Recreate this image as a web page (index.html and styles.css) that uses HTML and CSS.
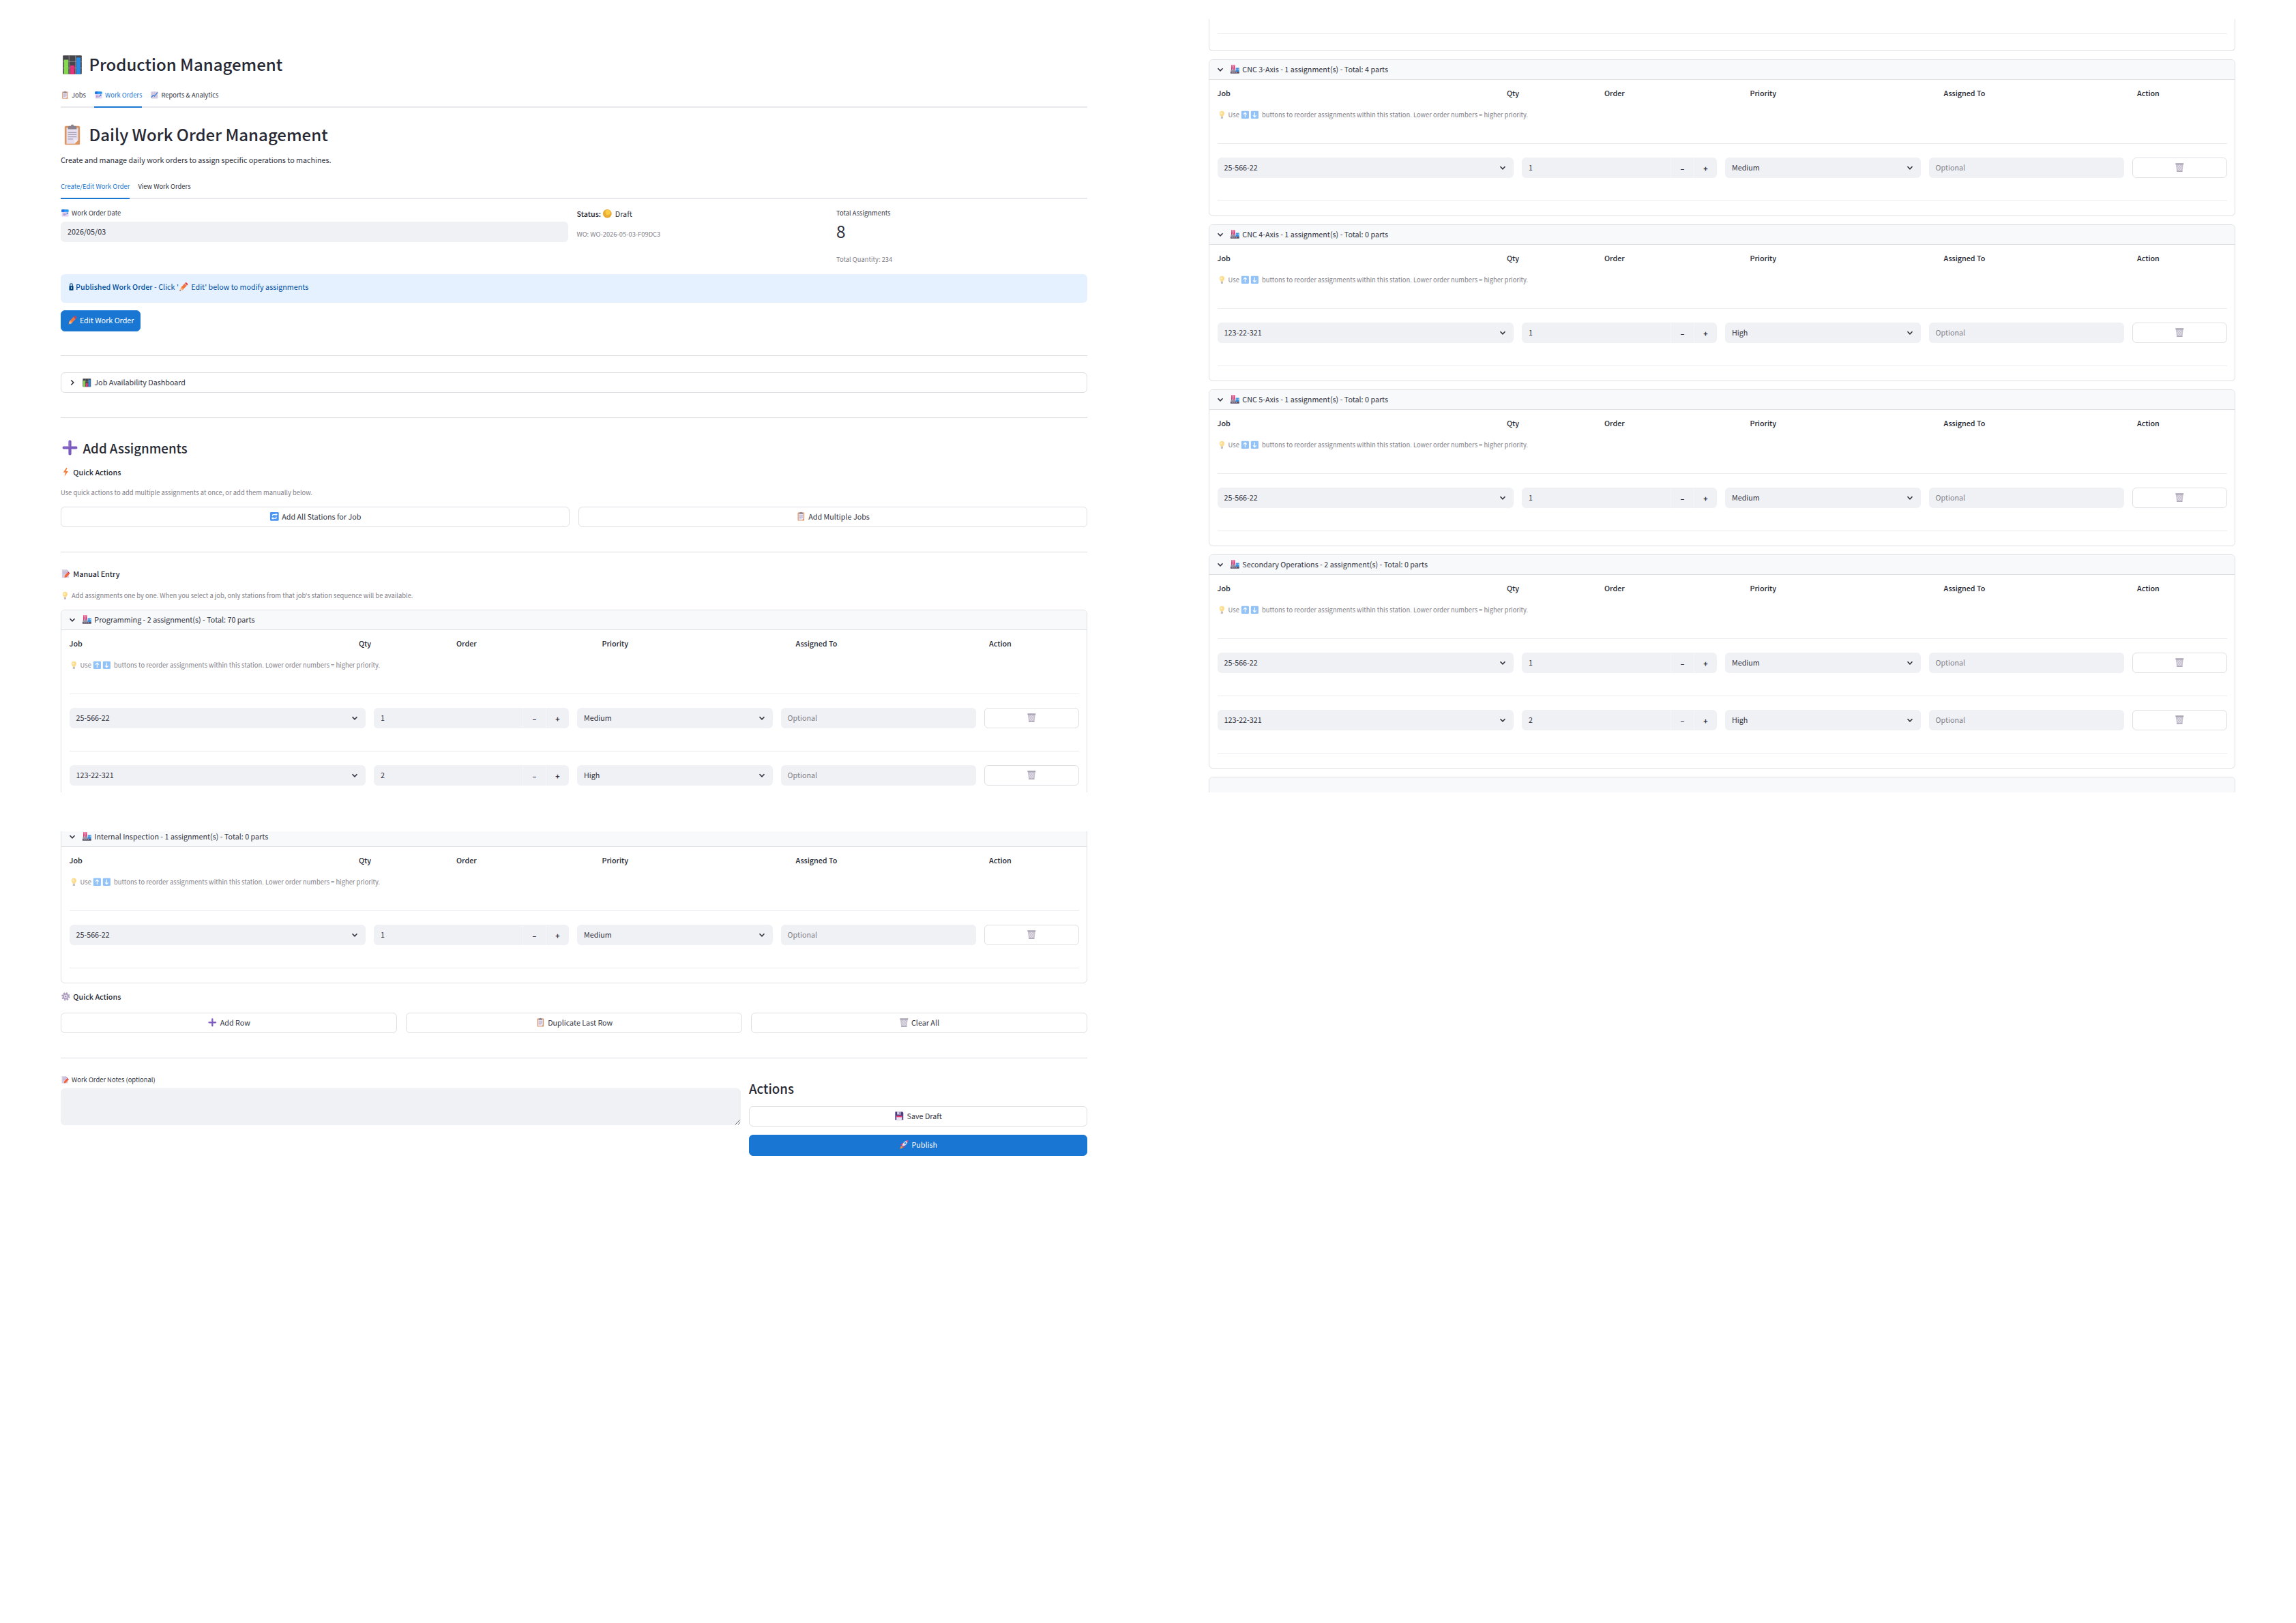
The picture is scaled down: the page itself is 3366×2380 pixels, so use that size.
FILE: index.html
```html
<!DOCTYPE html>
<html lang="en">
<head>
    <meta charset="utf-8">
    <meta name="viewport" content="width=device-width, initial-scale=1.0">
    <title>Production Management</title>
    <link rel="stylesheet" href="styles.css">
</head>
<body>
    <svg class="sprite" width="0" height="0">
        <symbol id="bars" viewBox="0 0 32 32"><rect x="3" y="3" width="26" height="26" rx="1" fill="#464549"/><path d="M3 11.500h26M3 20.500h26M11.500 3v26M20.500 3v26" stroke="#8d8a91" stroke-width="1"/><rect x="4.500" y="9" width="6" height="20" fill="#86d84f"/><rect x="13" y="17" width="6" height="12" fill="#e8307a"/><rect x="21.500" y="6" width="6" height="23" fill="#2a8be0"/></symbol>
        <symbol id="clip" viewBox="0 0 32 32"><rect x="5.500" y="3.500" width="21" height="26" rx="1.500" fill="#de9560"/><path d="M8 6h16v17l-5 5H8z" fill="#e6e0f1"/><path d="M19 28v-5h5z" fill="#f6f2fb"/><path d="M12 3.500h2a2 2 0 0 1 4 0h2a2 2 0 0 1 2 2V8H10V5.500a2 2 0 0 1 2-2z" fill="#8b8290"/><path d="M10 12.500h12M10 15.500h12M10 18.500h12M10 21.500h7" stroke="#a79fb3" stroke-width="1.200"/></symbol>
        <symbol id="calendar" viewBox="0 0 32 32"><rect x="4" y="4" width="25" height="25" rx="3" fill="#e3d5f3"/><path d="M3 6a3 3 0 0 1 3-3h20a3 3 0 0 1 3 3v6H3z" fill="#2196f3"/><path d="M3 6a3 3 0 0 1 3-3h7v9H3z" fill="#2471e8"/><path d="M8 15h3v3H8zM13 15h3v3h-3zM18 15h3v3h-3zM8 20h3v3H8zM13 20h3v3h-3zM18 20h3v3h-3zM8 25h3v2H8zM13 25h3v2h-3z" fill="#a08bc4"/><path d="M22 14h4v6h-4z" fill="#2687ec"/></symbol>
        <symbol id="chart" viewBox="0 0 32 32"><rect x="3" y="3" width="26" height="26" rx="2" fill="#dcd3e8"/><path d="M3 9.500h26M3 16h26M3 22.500h26M9.500 3v26M16 3v26M22.500 3v26" stroke="#bcb0cd" stroke-width="1"/><path d="M4 25l7-8 5 3L28 6" stroke="#2f7fd6" stroke-width="2.800" fill="none"/></symbol>
        <symbol id="lock" viewBox="0 0 16 32"><path d="M4 14V9a4 4 0 0 1 8 0v5" fill="none" stroke="#004280" stroke-width="2.500"/><rect x="1" y="13" width="14" height="15" rx="1.500" fill="#004280"/><path d="M8 17v7" stroke="#e5f1fd" stroke-width="2.500"/></symbol>
        <symbol id="pencil" viewBox="0 0 32 32"><path d="M6 20L19 6l7 7-13 13z" fill="#f4743b"/><path d="M6 20l3-3 7 7-3 3z" fill="#ff9d5c"/><path d="M20 5l2-2q2-1 4 1l2 2q2 2 1 4l-2 2z" fill="#e63946"/><path d="M6 20l7 7-10 3z" fill="#f6c79b"/><path d="M4 26l3 3-4 1z" fill="#5b4450"/></symbol>
        <symbol id="plus" viewBox="0 0 32 32"><path d="M13.500 5q0-2 2.500-2t2.500 2v8.500h8.500q2 0 2 2.500t-2 2.500h-8.500v8.500q0 2-2.500 2t-2.500-2v-8.500H5q-2 0-2-2.500t2-2.500h8.500z" fill="#7c5bbf"/><path d="M14.500 5v9.500H5" stroke="#a08ad8" stroke-width="1.300" fill="none"/></symbol>
        <symbol id="bolt" viewBox="0 0 32 32"><path d="M18 2L8 17h7l-3 13 12-17h-7l4-11z" fill="#fb7f3c"/></symbol>
        <symbol id="cycle" viewBox="0 0 32 32"><rect x="2" y="2" width="28" height="28" rx="3" fill="#4b96f3"/><path d="M10 15v-3q0-2 2-2h9M22 17v3q0 2-2 2h-9" stroke="#fff" stroke-width="2.600" fill="none"/><path d="M20 5.500l6 4.500-6 4.500zM12 17.500L6 22l6 4.500z" fill="#fff"/></symbol>
        <symbol id="memo" viewBox="0 0 32 32"><path d="M4 3h15l7 7v19H4z" fill="#d6cde2"/><path d="M19 3l7 7h-7z" fill="#b7aac9"/><path d="M8 9h8M8 13h12M8 17h8" stroke="#b0a4c2" stroke-width="1.300"/><path d="M13 22l9-10 6 5-9 10-7 2z" fill="#f4633a"/><path d="M22 12l3-2 5 5-2 2z" fill="#e0314f"/></symbol>
        <symbol id="bulb" viewBox="0 0 32 32"><path d="M16 2a9 9 0 0 1 9 9c0 5-4 6-5 11h-8c-1-5-5-6-5-11a9 9 0 0 1 9-9z" fill="#fdc63f"/><circle cx="14" cy="10" r="4" fill="#ffe69a"/><rect x="12" y="22" width="8" height="8" rx="2" fill="#a1989d"/></symbol>
        <symbol id="factory" viewBox="0 0 32 32"><path d="M5 2h4v19H4zM12 2h4l1 19h-6z" fill="#e0306f"/><path d="M5 2h4v5H5zM12 2h4v5h-4z" fill="#f56a95"/><path d="M3 20l6-5v5l7-5v5h4v8H3z" fill="#9a92a4"/><rect x="19" y="12" width="11" height="16" fill="#3b8fe0"/><path d="M21 15h3v3h-3zM26 15h3v3h-3z" fill="#9fd3ff"/><path d="M2 24h28v6H2z" fill="#5b4f66"/><path d="M6 25h3v3H6zM12 25h3v3h-3zM19 25h3v3h-3z" fill="#c9c1d3"/></symbol>
        <symbol id="up" viewBox="0 0 32 32"><rect x="2" y="2" width="28" height="28" rx="3" fill="#4b9cf5"/><path d="M16 25V9M10 14l6-6 6 6" stroke="#fff" stroke-width="3" fill="none"/></symbol>
        <symbol id="down" viewBox="0 0 32 32"><rect x="2" y="2" width="28" height="28" rx="3" fill="#4b9cf5"/><path d="M16 7v16M10 18l6 6 6-6" stroke="#fff" stroke-width="3" fill="none"/></symbol>
        <symbol id="trash" viewBox="0 0 32 32"><path d="M4 5h24l-3 25H7z" fill="#c5bfcd"/><path d="M3 3h26v4H3z" fill="#a9a2b3"/><path d="M9 10l13 15M15 8l9 10M8 17l9 11M23 10L10 25M17 8L8 18M24 17l-9 11" stroke="#f3f0f7" stroke-width="1.400"/><path d="M7 28h18v2H7z" fill="#a39bb0"/></symbol>
        <symbol id="gear" viewBox="0 0 32 32"><circle cx="16" cy="16" r="11.500" fill="none" stroke="#a99bbd" stroke-width="4" stroke-dasharray="5 4.030"/><circle cx="16" cy="16" r="8" fill="#e4dded" stroke="#a99bbd" stroke-width="4"/><circle cx="16" cy="16" r="2.500" fill="#8e7fa6"/></symbol>
        <symbol id="floppy" viewBox="0 0 32 32"><path d="M3 3h23l3 3v23H3z" fill="#4b3b7d"/><path d="M9 3h13v9H9z" fill="#d7cfe6"/><path d="M17 4h3v7h-3z" fill="#4b3b7d"/><path d="M7 16h18v13H7z" fill="#e9e2f3"/><path d="M7 16h18v4H7z" fill="#ed2f6c"/></symbol>
        <symbol id="rocket" viewBox="0 0 32 32"><path d="M8 15l6-3 6 6-3 7-3-2-6-5zM4 17l6-5 3 1-4 6zM15 28l5-6-1-3-6 4z" fill="#ee2f63"/><path d="M10 19q4-14 19-16-2 15-16 19z" fill="#dfd8ea"/><path d="M22 4l7-1-1 7z" fill="#ee2f63"/><circle cx="20" cy="12" r="3" fill="#3b93e6"/><path d="M9 20l4 4-3 4-7 2 2-7z" fill="#fb8b3a"/></symbol>
        <symbol id="dot" viewBox="0 0 32 32"><circle cx="16" cy="16" r="14" fill="#eaac38"/><circle cx="18" cy="12" r="8" fill="#fbcb45"/></symbol>
        <symbol id="chev" viewBox="0 0 10 10"><path d="M1.500 3.200L5 6.800l3.500-3.600" fill="none" stroke="#31333f" stroke-width="1.600"/></symbol>
    </svg>

    <div class="column">
        <div class="page first">
            <h1><svg class="e"><use href="#bars"/></svg>Production Management</h1>
            <div class="tabs">
                <a class="tab"><svg class="e"><use href="#clip"/></svg>Jobs</a>
                <a class="tab active"><svg class="e"><use href="#calendar"/></svg>Work Orders</a>
                <a class="tab"><svg class="e"><use href="#chart"/></svg>Reports &amp; Analytics</a>
            </div>
            <h1 class="daily"><svg class="e"><use href="#clip"/></svg>Daily Work Order Management</h1>
            <p class="intro">Create and manage daily work orders to assign specific operations to machines.</p>
            <div class="tabs sub">
                <a class="tab active">Create/Edit Work Order</a>
                <a class="tab">View Work Orders</a>
            </div>
            <div class="summary">
                <div>
                    <label class="label"><svg class="e"><use href="#calendar"/></svg>Work Order Date</label>
                    <div class="input date">2026/05/03</div>
                </div>
                <div class="status">
                    <p><b>Status:</b> <svg class="e"><use href="#dot"/></svg>Draft</p>
                    <p class="caption">WO: WO-2026-05-03-F09DC3</p>
                </div>
                <div class="metric">
                    <p class="label">Total Assignments</p>
                    <p class="value">8</p>
                    <p class="caption">Total Quantity: 234</p>
                </div>
            </div>
            <div class="alert"><svg class="e lock"><use href="#lock"/></svg><b>Published Work Order</b> - Click '<svg class="e"><use href="#pencil"/></svg>Edit' below to modify assignments</div>
            <button class="btn primary edit"><svg class="e"><use href="#pencil"/></svg>Edit Work Order</button>
            <hr>
            <div class="expander"><svg class="chev right"><use href="#chev"/></svg><svg class="e"><use href="#bars"/></svg>Job Availability Dashboard</div>
            <hr>
            <h2><svg class="e"><use href="#plus"/></svg>Add Assignments</h2>
            <p class="strong quick"><svg class="e"><use href="#bolt"/></svg>Quick Actions</p>
            <p class="caption hint">Use quick actions to add multiple assignments at once, or add them manually below.</p>
            <div class="buttons two">
                <button class="btn"><svg class="e"><use href="#cycle"/></svg>Add All Stations for Job</button>
                <button class="btn"><svg class="e"><use href="#clip"/></svg>Add Multiple Jobs</button>
            </div>
            <hr>
            <p class="strong manual"><svg class="e"><use href="#memo"/></svg>Manual Entry</p>
            <p class="caption one"><svg class="e"><use href="#bulb"/></svg>Add assignments one by one. When you select a job, only stations from that job's station sequence will be available.</p>

            <div class="panel">
                <div class="panel-title"><svg class="chev"><use href="#chev"/></svg><svg class="e"><use href="#factory"/></svg>Programming - 2 assignment(s) - Total: 70 parts</div>
                <div class="panel-body">
                    <div class="head"><b>Job</b><b>Qty</b><b>Order</b><b>Priority</b><b>Assigned To</b><b>Action</b></div>
                    <p class="caption"><svg class="e"><use href="#bulb"/></svg>Use <svg class="e arrow"><use href="#up"/></svg><svg class="e arrow"><use href="#down"/></svg> buttons to reorder assignments within this station. Lower order numbers = higher priority.</p>
                    <div class="row">
                        <div class="input">25-566-22<svg class="chev"><use href="#chev"/></svg></div>
                        <div class="input number"><span>1</span><i>–</i><i>+</i></div>
                        <div class="input">Medium<svg class="chev"><use href="#chev"/></svg></div>
                        <div class="input empty">Optional</div>
                        <button class="btn"><svg class="e"><use href="#trash"/></svg></button>
                    </div>
                    <div class="row">
                        <div class="input">123-22-321<svg class="chev"><use href="#chev"/></svg></div>
                        <div class="input number"><span>2</span><i>–</i><i>+</i></div>
                        <div class="input">High<svg class="chev"><use href="#chev"/></svg></div>
                        <div class="input empty">Optional</div>
                        <button class="btn"><svg class="e"><use href="#trash"/></svg></button>
                    </div>
                </div>
            </div>
        </div>

        <div class="page last">
            <div class="panel">
                <div class="panel-title"><svg class="chev"><use href="#chev"/></svg><svg class="e"><use href="#factory"/></svg>Internal Inspection - 1 assignment(s) - Total: 0 parts</div>
                <div class="panel-body">
                    <div class="head"><b>Job</b><b>Qty</b><b>Order</b><b>Priority</b><b>Assigned To</b><b>Action</b></div>
                    <p class="caption"><svg class="e"><use href="#bulb"/></svg>Use <svg class="e arrow"><use href="#up"/></svg><svg class="e arrow"><use href="#down"/></svg> buttons to reorder assignments within this station. Lower order numbers = higher priority.</p>
                    <div class="row">
                        <div class="input">25-566-22<svg class="chev"><use href="#chev"/></svg></div>
                        <div class="input number"><span>1</span><i>–</i><i>+</i></div>
                        <div class="input">Medium<svg class="chev"><use href="#chev"/></svg></div>
                        <div class="input empty">Optional</div>
                        <button class="btn"><svg class="e"><use href="#trash"/></svg></button>
                    </div>
                </div>
            </div>
            <p class="strong gear"><svg class="e"><use href="#gear"/></svg>Quick Actions</p>
            <div class="buttons three">
                <button class="btn"><svg class="e"><use href="#plus"/></svg>Add Row</button>
                <button class="btn"><svg class="e"><use href="#clip"/></svg>Duplicate Last Row</button>
                <button class="btn"><svg class="e"><use href="#trash"/></svg>Clear All</button>
            </div>
            <hr>
            <div class="finish">
                <div>
                    <label class="label"><svg class="e"><use href="#memo"/></svg>Work Order Notes (optional)</label>
                    <textarea class="notes"></textarea>
                </div>
                <div class="actions">
                    <h3>Actions</h3>
                    <button class="btn"><svg class="e"><use href="#floppy"/></svg>Save Draft</button>
                    <button class="btn primary"><svg class="e"><use href="#rocket"/></svg>Publish</button>
                </div>
            </div>
        </div>
    </div>

    <div class="column">
        <div class="page second">
            <div class="panel rest"></div>
            <div class="panel">
                <div class="panel-title"><svg class="chev"><use href="#chev"/></svg><svg class="e"><use href="#factory"/></svg>CNC 3-Axis - 1 assignment(s) - Total: 4 parts</div>
                <div class="panel-body">
                    <div class="head"><b>Job</b><b>Qty</b><b>Order</b><b>Priority</b><b>Assigned To</b><b>Action</b></div>
                    <p class="caption"><svg class="e"><use href="#bulb"/></svg>Use <svg class="e arrow"><use href="#up"/></svg><svg class="e arrow"><use href="#down"/></svg> buttons to reorder assignments within this station. Lower order numbers = higher priority.</p>
                    <div class="row">
                        <div class="input">25-566-22<svg class="chev"><use href="#chev"/></svg></div>
                        <div class="input number"><span>1</span><i>–</i><i>+</i></div>
                        <div class="input">Medium<svg class="chev"><use href="#chev"/></svg></div>
                        <div class="input empty">Optional</div>
                        <button class="btn"><svg class="e"><use href="#trash"/></svg></button>
                    </div>
                </div>
            </div>
            <div class="panel">
                <div class="panel-title"><svg class="chev"><use href="#chev"/></svg><svg class="e"><use href="#factory"/></svg>CNC 4-Axis - 1 assignment(s) - Total: 0 parts</div>
                <div class="panel-body">
                    <div class="head"><b>Job</b><b>Qty</b><b>Order</b><b>Priority</b><b>Assigned To</b><b>Action</b></div>
                    <p class="caption"><svg class="e"><use href="#bulb"/></svg>Use <svg class="e arrow"><use href="#up"/></svg><svg class="e arrow"><use href="#down"/></svg> buttons to reorder assignments within this station. Lower order numbers = higher priority.</p>
                    <div class="row">
                        <div class="input">123-22-321<svg class="chev"><use href="#chev"/></svg></div>
                        <div class="input number"><span>1</span><i>–</i><i>+</i></div>
                        <div class="input">High<svg class="chev"><use href="#chev"/></svg></div>
                        <div class="input empty">Optional</div>
                        <button class="btn"><svg class="e"><use href="#trash"/></svg></button>
                    </div>
                </div>
            </div>
            <div class="panel">
                <div class="panel-title"><svg class="chev"><use href="#chev"/></svg><svg class="e"><use href="#factory"/></svg>CNC 5-Axis - 1 assignment(s) - Total: 0 parts</div>
                <div class="panel-body">
                    <div class="head"><b>Job</b><b>Qty</b><b>Order</b><b>Priority</b><b>Assigned To</b><b>Action</b></div>
                    <p class="caption"><svg class="e"><use href="#bulb"/></svg>Use <svg class="e arrow"><use href="#up"/></svg><svg class="e arrow"><use href="#down"/></svg> buttons to reorder assignments within this station. Lower order numbers = higher priority.</p>
                    <div class="row">
                        <div class="input">25-566-22<svg class="chev"><use href="#chev"/></svg></div>
                        <div class="input number"><span>1</span><i>–</i><i>+</i></div>
                        <div class="input">Medium<svg class="chev"><use href="#chev"/></svg></div>
                        <div class="input empty">Optional</div>
                        <button class="btn"><svg class="e"><use href="#trash"/></svg></button>
                    </div>
                </div>
            </div>
            <div class="panel">
                <div class="panel-title"><svg class="chev"><use href="#chev"/></svg><svg class="e"><use href="#factory"/></svg>Secondary Operations - 2 assignment(s) - Total: 0 parts</div>
                <div class="panel-body">
                    <div class="head"><b>Job</b><b>Qty</b><b>Order</b><b>Priority</b><b>Assigned To</b><b>Action</b></div>
                    <p class="caption"><svg class="e"><use href="#bulb"/></svg>Use <svg class="e arrow"><use href="#up"/></svg><svg class="e arrow"><use href="#down"/></svg> buttons to reorder assignments within this station. Lower order numbers = higher priority.</p>
                    <div class="row">
                        <div class="input">25-566-22<svg class="chev"><use href="#chev"/></svg></div>
                        <div class="input number"><span>1</span><i>–</i><i>+</i></div>
                        <div class="input">Medium<svg class="chev"><use href="#chev"/></svg></div>
                        <div class="input empty">Optional</div>
                        <button class="btn"><svg class="e"><use href="#trash"/></svg></button>
                    </div>
                    <div class="row">
                        <div class="input">123-22-321<svg class="chev"><use href="#chev"/></svg></div>
                        <div class="input number"><span>2</span><i>–</i><i>+</i></div>
                        <div class="input">High<svg class="chev"><use href="#chev"/></svg></div>
                        <div class="input empty">Optional</div>
                        <button class="btn"><svg class="e"><use href="#trash"/></svg></button>
                    </div>
                </div>
            </div>
            <div class="panel"><div class="panel-title"></div></div>
        </div>
    </div>
</body>
</html>
```
FILE: styles.css
```css
* {
    box-sizing: border-box;
    margin: 0;
    padding: 0;
}
body {
    background-color: #ffffff;
    color: #31333f;
    font-family: "Noto Sans CJK SC", "Noto Sans", sans-serif;
    font-size: 10.75px;
    line-height: 18px;
    display: grid;
    grid-template-columns: 1683px 1683px;
    white-space: nowrap;
}
b {
    font-weight: 500;
    color: #262833;
}
.sprite {
    position: absolute;
}
.e {
    width: 1.36em;
    height: 1.36em;
    margin-right: 0.35em;
    vertical-align: -0.28em;
}
.chev {
    width: 10px;
    height: 10px;
}
.chev.right {
    transform: rotate(-90deg);
}
.column {
    padding-top: 28px;
}
.page {
    padding: 0 89px;
    height: 1133.5px;
    overflow: hidden;
}
.page.first {
    padding-top: 47px;
}
.page.last {
    margin-top: 57px;
    height: 500px;
}
h1 {
    font-size: 24px;
    font-weight: 500;
    color: #262833;
    line-height: 38px;
    height: 38px;
}
h1 .e {
    width: 34px;
    height: 34px;
    margin-right: 7.5px;
    vertical-align: -7.5px;
}
h1.daily {
    margin-top: 20px;
}
h2, h3 {
    font-size: 18.7px;
    font-weight: 500;
    color: #262833;
    line-height: 32px;
    height: 32px;
}
h2 {
    margin-top: 28px;
}
h2 .e {
    width: 27px;
    height: 27px;
    margin-right: 5.5px;
    vertical-align: -5px;
}
hr {
    border: none;
    height: 1px;
    background-color: #dcdde1;
    margin-top: 36px;
}
.tabs {
    display: flex;
    gap: 12px;
    margin-top: 9px;
    height: 36px;
    border-bottom: 2px solid #e8e9ec;
    font-size: 9.4px;
    line-height: 34px;
}
.tabs.sub {
    margin-top: 12px;
}
.tab {
    height: 36px;
}
.tab.active {
    color: #1976d2;
    border-bottom: 2px solid #1976d2;
}
.intro {
    margin-top: 10px;
}
.summary {
    display: grid;
    grid-template-columns: 744px 368px 368px;
    gap: 12.5px;
    margin-top: 13px;
    height: 82px;
}
.label {
    display: block;
    font-size: 9.4px;
    line-height: 14px;
    height: 14px;
}
.caption {
    font-size: 9.4px;
    line-height: 14px;
    height: 14px;
    color: #7f8088;
}
.caption .e {
    opacity: 0.6;
}
.input {
    display: flex;
    align-items: center;
    justify-content: space-between;
    height: 30px;
    padding: 0 11px 1px 10px;
    border-radius: 6px;
    background-color: #f0f1f5;
}
.input.date {
    margin-top: 6px;
}
.input.empty {
    color: #7f8088;
}
.status .caption {
    margin-top: 13px;
}
.value {
    font-size: 24.4px;
    line-height: 30px;
    margin-top: 5px;
}
.metric .caption {
    margin-top: 19px;
}
.alert {
    margin-top: 15px;
    height: 42px;
    padding: 10px 12px;
    border-radius: 6px;
    background-color: #e5f1fe;
    color: #004f9e;
}
.alert b {
    color: #004f9e;
}
.e.lock {
    width: 7px;
    height: 15px;
    margin-right: 3px;
}
.btn {
    display: block;
    width: 100%;
    height: 30px;
    padding-bottom: 1px;
    border: 1px solid #dfe0e4;
    border-radius: 6px;
    background-color: #ffffff;
    color: #31333f;
    font-family: inherit;
    font-size: 10.75px;
    line-height: 18px;
}
.btn.primary {
    height: 31px;
    background-color: #1976d2;
    border-color: #1976d2;
    color: #ffffff;
}
.btn.edit {
    width: 117px;
    margin-top: 11px;
}
.btn.edit + hr {
    margin-top: 35px;
}
.expander {
    display: flex;
    align-items: center;
    margin-top: 24px;
    height: 30px;
    padding: 0 11px;
    border: 1px solid #dcdde1;
    border-radius: 6px;
}
.expander .chev {
    margin-right: 9px;
}
.strong {
    font-weight: 500;
    color: #262833;
}
.quick {
    margin-top: 11px;
}
.hint {
    margin-top: 13px;
}
.buttons {
    display: grid;
    gap: 12.5px;
    margin-top: 14px;
}
.two {
    grid-template-columns: 1fr 1fr;
}
.three {
    grid-template-columns: 1fr 1fr 1fr;
}
.manual {
    margin-top: 23px;
}
.one {
    margin-top: 15px;
    margin-bottom: 14px;
}

/* station panels */
.panel {
    border: 1px solid #dfe0e4;
    border-radius: 6px;
    overflow: hidden;
    margin-bottom: 12.5px;
}
.panel-title {
    display: flex;
    align-items: center;
    height: 29px;
    padding: 0 11px 1px;
    background-color: #f8f9fb;
    border-bottom: 1px solid #dfe0e4;
}
.panel-title .chev {
    margin-right: 9px;
}
.panel-body {
    padding: 11px 11.5px 20.5px;
}
.head {
    display: grid;
    grid-template-columns: 424.5px 143px 213.5px 284px 283.5px auto;
}
.panel-body .caption {
    margin-top: 15px;
    padding-bottom: 49px;
    height: 50px;
    border-bottom: 1px solid #ebecef;
}
.caption .arrow {
    margin-right: 0.18em;
}
.row {
    display: grid;
    grid-template-columns: 434.5px 286px 286.5px 286.5px 138.5px;
    gap: 12px;
    height: 84px;
    padding-top: 20px;
    border-bottom: 1px solid #ebecef;
}
.input.number {
    padding: 0 0 1px 10px;
}
.number span {
    flex: 1;
}
.number i {
    width: 34px;
    height: 30px;
    padding-top: 2px;
    border-left: 1px solid #f5f6f9;
    font-style: normal;
    font-weight: 700;
    line-height: 30px;
    text-align: center;
}
.row .btn .e {
    margin: 0;
}
.panel.rest {
    height: 46.5px;
    border-top: none;
    border-radius: 0 0 6px 6px;
    padding: 21px 11.5px 0;
}
.panel.rest::before {
    content: "";
    display: block;
    height: 1px;
    background-color: #ebecef;
}

/* notes and publishing */
.last .panel {
    margin-top: -6.5px;
}
.gear {
    margin-top: -1px;
}
.finish {
    display: grid;
    grid-template-columns: 997px 496px;
    gap: 12px;
    margin-top: 24px;
}
.notes {
    display: block;
    width: 100%;
    height: 54px;
    margin-top: 6px;
    border: none;
    border-radius: 6px;
    background-color: #f0f1f5;
    resize: vertical;
}
.actions h3 {
    margin-top: 4px;
}
.actions .btn {
    margin-top: 10px;
}
.actions .primary {
    margin-top: 12px;
}
```
